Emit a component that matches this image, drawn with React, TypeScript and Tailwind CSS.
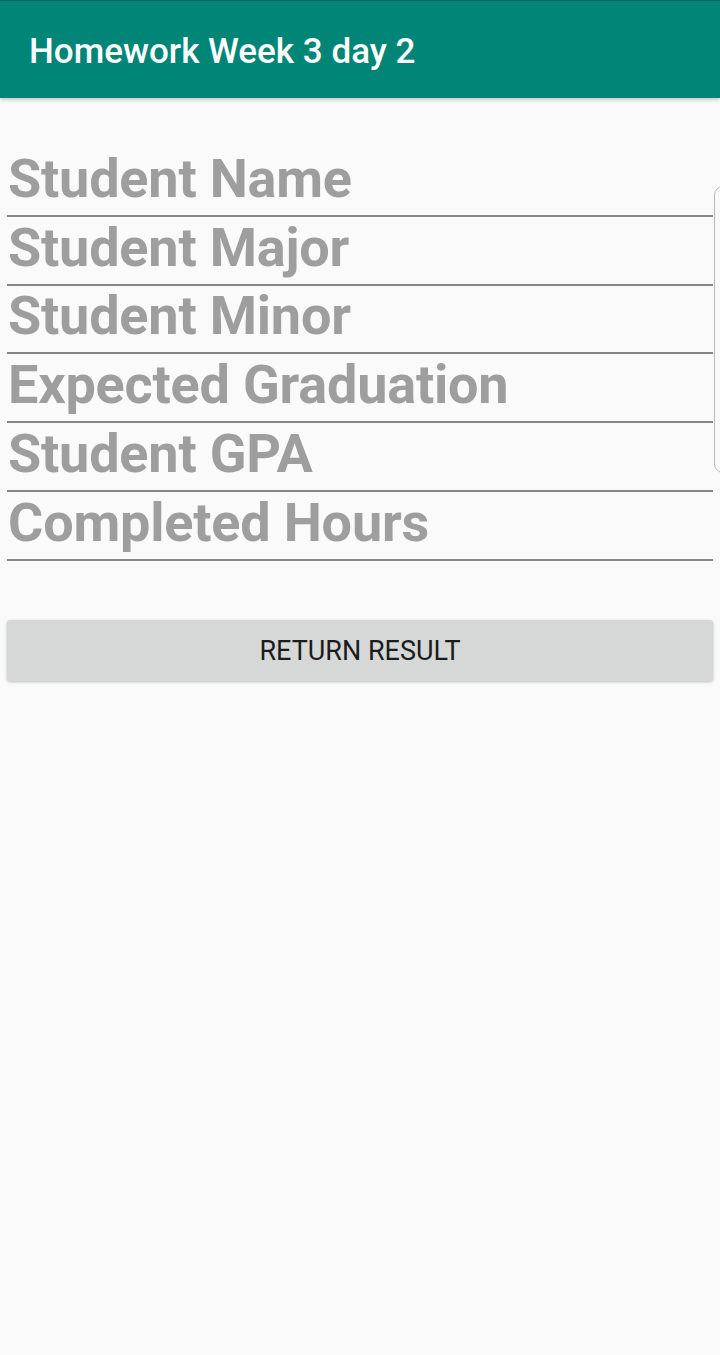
import React from "react";

const fields = [
  "Student Name",
  "Student Major",
  "Student Minor",
  "Expected Graduation",
  "Student GPA",
  "Completed Hours",
];

const App = () => {
  return (
    <main
      className="relative min-h-[1355px] w-[720px] bg-[#fafafa] overflow-hidden"
      style={{ fontFamily: "Roboto, 'Liberation Sans', sans-serif" }}
    >
      <header className="relative z-10 flex h-[98px] items-center border-t border-[#00695c] bg-[#008577] pl-[29px] shadow-[0_2px_4px_rgba(0,0,0,0.2)]">
        <h1 className="mt-[4px] text-[35px] font-medium leading-none text-white">
          Homework Week 3 day 2
        </h1>
      </header>

      <section className="flex flex-col px-[7px] pt-[50px]">
        {fields.map((label) => (
          <div
            key={label}
            className="flex h-[68.8px] items-end border-b-2 border-[#858585] pb-[9px]"
          >
            <span className="pl-px text-[54px] font-bold leading-none tracking-[-0.2px] text-[#9e9e9e]">
              {label}
            </span>
          </div>
        ))}

        <button className="mt-[59px] flex h-[61px] w-full items-center justify-center rounded-[3px] bg-[#d6d7d7] pt-[3px] shadow-[0_1px_3px_rgba(0,0,0,0.25)]">
          <span className="text-[27px] font-normal leading-none text-[#1c1c1c]">
            RETURN RESULT
          </span>
        </button>
      </section>

      {/* edge of a panel peeking in from the right */}
      <div className="absolute left-[714px] top-[186px] h-[287px] w-[20px] rounded-l-[9px] border border-[#b8b8b8] bg-[#fafafa]" />
    </main>
  );
};

export default App;
